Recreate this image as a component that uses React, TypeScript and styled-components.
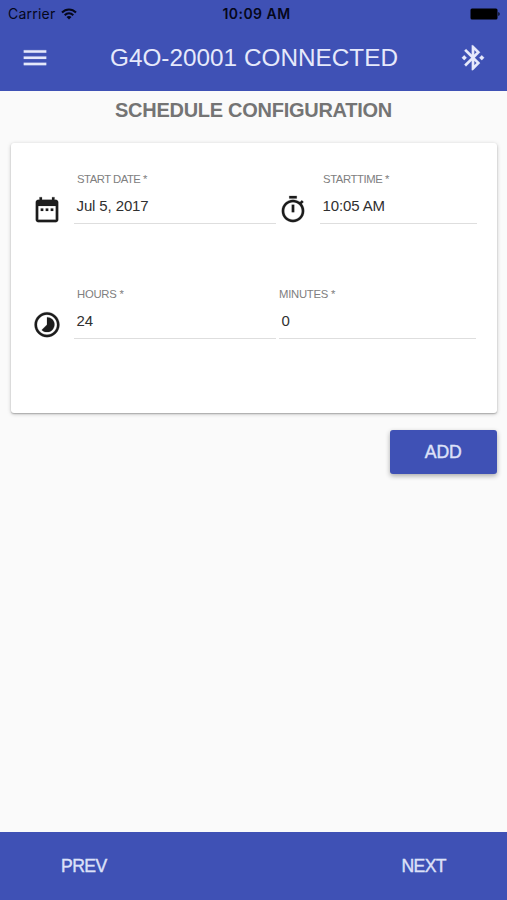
import React from 'react';
import styled, { createGlobalStyle } from 'styled-components';

const GlobalStyle = createGlobalStyle`
  * { box-sizing: border-box; }
  body { margin: 0; background: #fafafa; }
`;

const Screen = styled.div`
  width: 507px;
  height: 900px;
  display: flex;
  flex-direction: column;
  background: #fafafa;
  font-family: "Liberation Sans", Arial, sans-serif;
  overflow: hidden;
`;

const Header = styled.header`
  height: 91px;
  flex: none;
  background: #3f51b5;
`;

const StatusBar = styled.div`
  height: 27px;
  display: grid;
  grid-template-columns: 1fr auto 1fr;
  align-items: center;
  padding: 0 7px 0 8px;
  color: #05071a;
  font-family: Inter, sans-serif;
  font-size: 14px;
  white-space: nowrap;
`;

const Carrier = styled.div`
  display: flex;
  align-items: center;
  gap: 6px;
  letter-spacing: 0.22px;
`;

const Clock = styled.div`
  font-size: 14px;
  font-weight: 600;
  letter-spacing: 0.45px;
  padding-left: 5px;
`;

const Battery = styled.svg`
  width: 30px;
  height: 12px;
  justify-self: end;
`;

const Toolbar = styled.div`
  height: 61px;
  display: flex;
  align-items: center;
  justify-content: space-between;
  padding: 0 19px 0 20px;
  color: #e6e9fb;
`;

const Title = styled.h1`
  margin: 0;
  font-size: 24.3px;
  line-height: 30px;
  font-weight: 400;
  white-space: nowrap;
  letter-spacing: 0.02px;
`;

const Icon = styled.svg`
  width: 30px;
  height: 30px;
  flex: none;
  fill: currentColor;
`;

const Heading = styled.h2`
  margin: 0;
  height: 52px;
  padding-top: 8px;
  text-align: center;
  font-size: 20px;
  line-height: 23px;
  font-weight: 700;
  letter-spacing: -0.27px;
  color: #747474;
  white-space: nowrap;
`;

const Content = styled.main`
  flex: 1;
`;

const Card = styled.section`
  margin: 0 10px 0 11px;
  height: 270px;
  padding: 28px 20px 0 21px;
  background: #fff;
  border-radius: 3px;
  color: #1c1c1c;
  box-shadow: 0 1px 4px rgba(0, 0, 0, 0.2), 0 1px 1.5px rgba(0, 0, 0, 0.24);
`;

const Row = styled.div`
  height: 115px;
  display: flex;
  align-items: flex-start;
`;

const IconSlot = styled.div<{ $before?: number; $after: number }>`
  display: flex;
  padding-top: 24px;
  margin: 0 ${(p) => p.$after}px 0 ${(p) => p.$before ?? 0}px;
`;

const FieldBox = styled.div<{ $width: number; $gap?: number }>`
  width: ${(p) => p.$width}px;
  height: 53px;
  margin-left: ${(p) => p.$gap ?? 0}px;
  border-bottom: 1px solid #dedede;
  white-space: nowrap;
`;

const Label = styled.div<{ $indent: number; $spacing: number }>`
  height: 24px;
  padding: 0 0 0 ${(p) => p.$indent}px;
  font-size: 11.3px;
  line-height: 16px;
  letter-spacing: ${(p) => p.$spacing}px;
  color: #808080;
`;

const Value = styled.div`
  padding-left: 2.5px;
  font-size: 15px;
  line-height: 22px;
  letter-spacing: -0.12px;
  color: #303030;
`;

const Actions = styled.div`
  display: flex;
  justify-content: flex-end;
  padding: 17px 10px 0 0;
`;

const AddButton = styled.button`
  width: 107.5px;
  height: 44px;
  padding: 0;
  border: 0;
  border-radius: 3px;
  background: #3f51b5;
  color: #dde1f8;
  font: 400 17.6px/44px "Liberation Sans", Arial, sans-serif;
  -webkit-text-stroke: 0.45px currentColor;
  box-shadow: 0 2px 5px rgba(0, 0, 0, 0.32);
`;

const Footer = styled.footer`
  height: 68px;
  flex: none;
  display: flex;
  align-items: center;
  justify-content: space-between;
  padding: 0 61px;
  background: #3f51b5;
`;

const NavButton = styled.button`
  padding: 0;
  border: 0;
  background: none;
  color: #dde1f8;
  font: 400 17.6px/24px "Liberation Sans", Arial, sans-serif;
  letter-spacing: -0.6px;
  -webkit-text-stroke: 0.4px currentColor;
`;

const paths = {
  menu: 'M3 18h18v-2H3v2zm0-5h18v-2H3v2zm0-7v2h18V6H3z',
  bluetooth:
    'M7 12l-2-2-2 2 2 2 2-2zm10.71-4.29L12 2h-1v7.59L6.41 5 5 6.41 10.59 12 5 17.59 6.41 19 11 14.41V22h1l5.71-5.71-4.3-4.29 4.3-4.29zM13 5.83l1.88 1.88L13 9.59V5.83zm1.88 10.46L13 18.17v-3.76l1.88 1.88zM19 10l-2 2 2 2 2-2-2-2z',
  date:
    'M9 11H7v2h2v-2zm4 0h-2v2h2v-2zm4 0h-2v2h2v-2zm2-7h-1V2h-2v2H8V2H6v2H5c-1.11 0-1.99.9-1.99 2L3 20c0 1.1.89 2 2 2h14c1.1 0 2-.9 2-2V6c0-1.1-.9-2-2-2zm0 16H5V9h14v11z',
  timer:
    'M15 1H9v2h6V1zm-4 13h2V8h-2v6zm8.03-6.61l1.42-1.42c-.43-.51-.9-.99-1.41-1.41l-1.42 1.42C16.07 4.74 14.12 4 12 4c-4.97 0-9 4.03-9 9s4.02 9 9 9 9-4.03 9-9c0-2.12-.74-4.07-1.97-5.61zM12 20c-3.87 0-7-3.13-7-7s3.13-7 7-7 7 3.13 7 7-3.13 7-7 7z',
  timelapse:
    'M16.24 7.76C15.07 6.59 13.54 6 12 6v6l-4.24 4.24c2.34 2.34 6.14 2.34 8.49 0 2.34-2.34 2.34-6.14-.01-8.48zM12 2C6.48 2 2 6.48 2 12s4.48 10 10 10 10-4.48 10-10S17.52 2 12 2zm0 18c-4.42 0-8-3.58-8-8s3.58-8 8-8 8 3.58 8 8-3.58 8-8 8z',
};

function Glyph({ name }: { name: keyof typeof paths }) {
  return (
    <Icon viewBox="0 0.3 24 24" aria-hidden="true">
      <path d={paths[name]} stroke="currentColor" strokeWidth="0.15" />
    </Icon>
  );
}

interface FieldProps {
  label: string;
  value: string;
  width: number;
  gap?: number;
  indent?: number;
  spacing?: number;
}

function Field({ label, value, width, gap, indent = 3, spacing = -0.25 }: FieldProps) {
  return (
    <FieldBox $width={width} $gap={gap}>
      <Label $indent={indent} $spacing={spacing}>{label}</Label>
      <Value>{value}</Value>
    </FieldBox>
  );
}

export default function App() {
  return (
    <Screen>
      <GlobalStyle />
      <Header>
        <StatusBar>
          <Carrier>
            <span>Carrier</span>
            <svg width="16" height="12" viewBox="0 0 16 12" fill="none" stroke="currentColor" strokeWidth="2">
              <path d="M1 4.5C5 .4 11 .4 15 4.5" />
              <path d="M3.7 7.2c2.5-2.5 6.1-2.5 8.6 0" />
              <path d="M8 11.6 5.5 9.1c1.4-1.4 3.6-1.4 5 0z" fill="currentColor" stroke="none" />
            </svg>
          </Carrier>
          <Clock>10:09 AM</Clock>
          <Battery viewBox="0 0 30 12" fill="#000">
            <rect x="0.5" y="0.5" width="27" height="11" rx="1.5" />
            <path d="M28.4 4c1.6.6 1.6 3.4 0 4z" />
          </Battery>
        </StatusBar>
        <Toolbar>
          <Glyph name="menu" />
          <Title>G4O-20001 CONNECTED</Title>
          <Glyph name="bluetooth" />
        </Toolbar>
      </Header>
      <Content>
        <Heading>SCHEDULE CONFIGURATION</Heading>
        <Card>
          <Row>
            <IconSlot $after={12}><Glyph name="date" /></IconSlot>
            <Field label="START DATE *" value="Jul 5, 2017" width={202} spacing={-0.48} />
            <IconSlot $before={2} $after={12}><Glyph name="timer" /></IconSlot>
            <Field label="STARTTIME *" value="10:05 AM" width={157} spacing={-0.4} />
          </Row>
          <Row>
            <IconSlot $after={12}><Glyph name="timelapse" /></IconSlot>
            <Field label="HOURS *" value="24" width={202} />
            <Field label="MINUTES *" value="0" width={196.5} gap={3} indent={0} />
          </Row>
        </Card>
        <Actions><AddButton>ADD</AddButton></Actions>
      </Content>
      <Footer>
        <NavButton>PREV</NavButton>
        <NavButton>NEXT</NavButton>
      </Footer>
    </Screen>
  );
}
